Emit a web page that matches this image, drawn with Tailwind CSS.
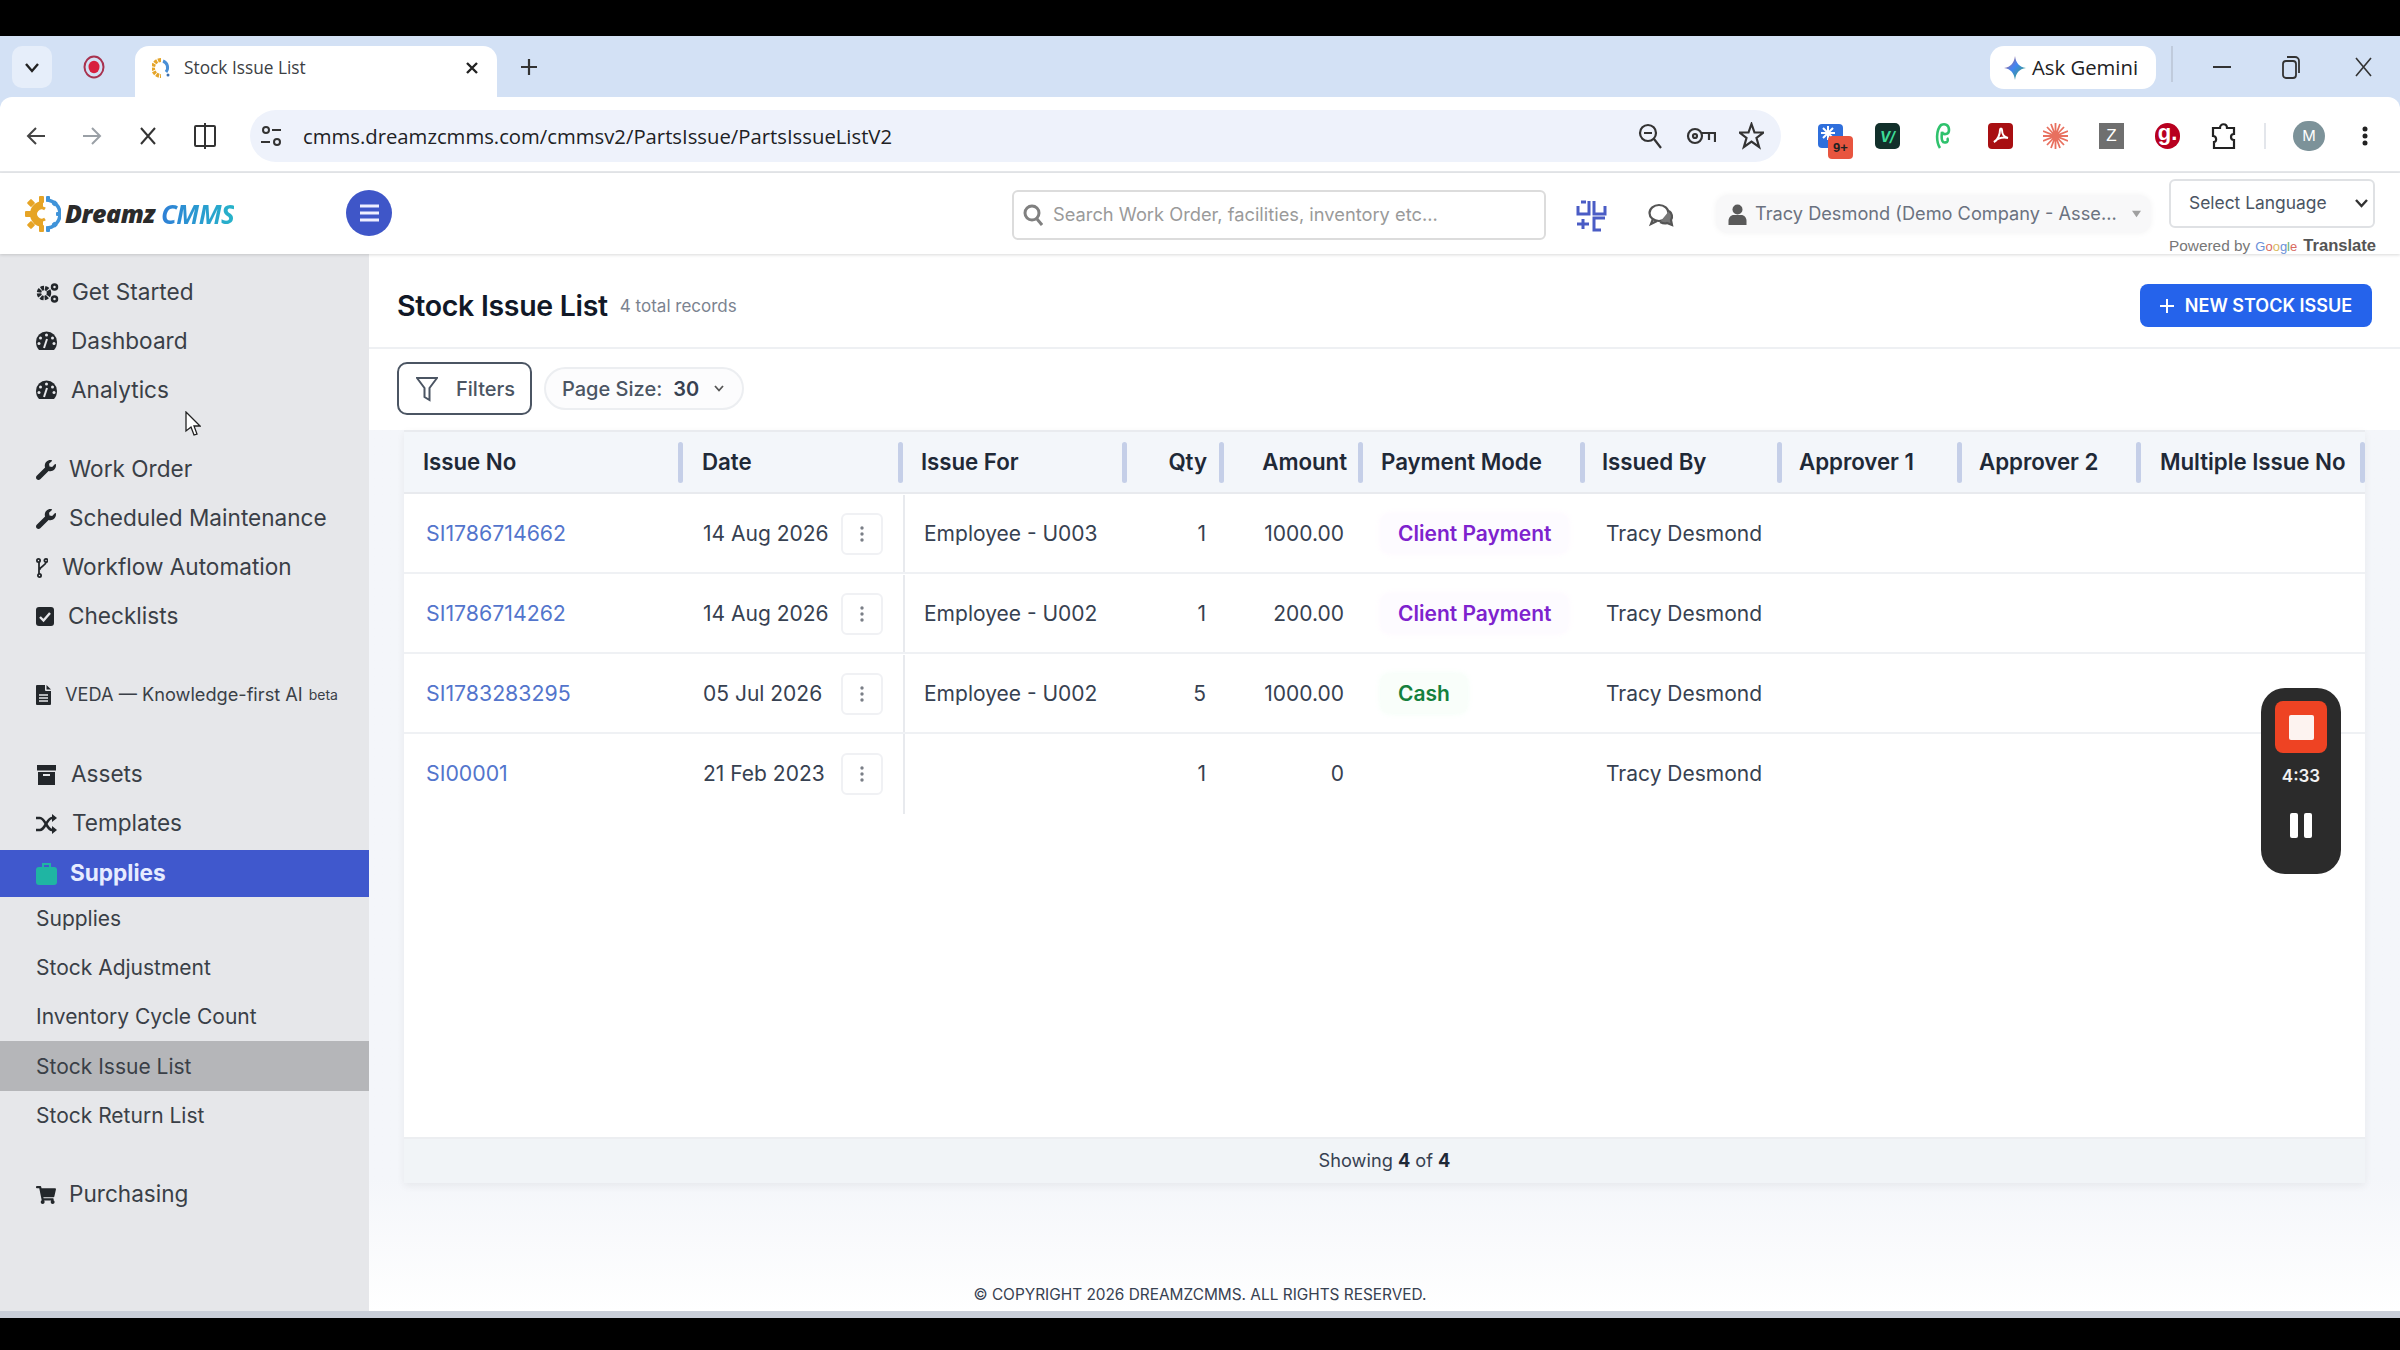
<!DOCTYPE html>
<html lang="en">
<head>
<meta charset="utf-8">
<title>Stock Issue List</title>
<script src="https://cdn.jsdelivr.net/npm/@tailwindcss/browser@4"></script>
</head>
<body class="m-0 bg-black">
<div class="relative flex h-[1350px] w-[2400px] flex-col overflow-hidden bg-black font-['Inter',sans-serif] text-[#374151]">
  <!-- black top -->
  <div class="h-[36px] shrink-0 bg-black"></div>

  <!-- tab strip -->
  <div class="flex h-[61px] shrink-0 items-end bg-[#d3e1f5]">
    <div class="ml-[12px] mb-[9px] flex h-[42px] w-[40px] items-center justify-center rounded-[10px] bg-[#e6eefa]">
      <svg class="h-[18px] w-[18px]" viewBox="0 0 18 18" fill="none" stroke="#222" stroke-width="2.4"><path d="M3 6l6 7 6-7"/></svg>
    </div>
    <div class="ml-[30px] mb-[9px] flex h-[42px] w-[24px] items-center justify-center">
      <svg class="h-[24px] w-[22px]" viewBox="0 0 22 24"><ellipse cx="11" cy="12" rx="9.5" ry="10.5" fill="none" stroke="#a8324f" stroke-width="2"/><ellipse cx="11" cy="12" rx="5.5" ry="6.2" fill="#d8203f"/></svg>
    </div>
    <div class="ml-[29px] flex h-[51px] w-[362px] items-center rounded-t-[14px] bg-white pb-[8px] pl-[17px] pr-[16px]">
      <svg class="h-[20px] w-[20px] shrink-0" viewBox="0 0 20 20"><path d="M9 2a8 8 0 0 0 0 16" fill="none" stroke="#e5a52a" stroke-width="4" stroke-dasharray="3 1"/><path d="M11 3a7 7 0 0 1 3 11" fill="none" stroke="#4a8fd6" stroke-width="3"/><circle cx="16" cy="17" r="1.5" fill="#3b6fb0"/></svg>
      <span class="ml-[12px] font-['Open_Sans',sans-serif] text-[17.3px] text-[#3c4043]">Stock Issue List</span>
      <svg class="ml-auto mr-[2px] h-[14px] w-[14px]" viewBox="0 0 14 14" stroke="#222" stroke-width="2.4"><path d="M2 2l10 10M12 2L2 12"/></svg>
    </div>
    <div class="mb-[9px] ml-[22px] flex h-[42px] items-center">
      <svg class="h-[20px] w-[20px]" viewBox="0 0 20 20" stroke="#333" stroke-width="2.2"><path d="M10 2v16M2 10h16"/></svg>
    </div>
    <div class="mb-[8px] ml-auto flex h-[43px] w-[166px] items-center rounded-[14px] bg-white pl-[13px]">
      <svg class="h-[26px] w-[24px]" viewBox="0 0 24 26"><defs><linearGradient id="gem" x1="0" y1="0" x2="1" y2="1"><stop offset="0" stop-color="#e8594a"/><stop offset=".45" stop-color="#4285f4"/><stop offset="1" stop-color="#34a853"/></linearGradient></defs><path d="M12 1c1 7 4 11 11 12-7 1-10 5-11 12-1-7-4-11-11-12 7-1 10-5 11-12z" fill="url(#gem)"/></svg>
      <span class="ml-[5px] font-['Open_Sans',sans-serif] text-[20.3px] font-medium text-[#202124]">Ask Gemini</span>
    </div>
    <div class="mb-[15px] ml-[15px] h-[36px] w-[2px] bg-[#c0cbdc]"></div>
    <div class="mb-[9px] flex h-[42px] w-[227px] items-center">
      <svg class="ml-[40px] h-[4px] w-[18px]" viewBox="0 0 18 4"><path d="M0 2h18" stroke="#333" stroke-width="2"/></svg>
      <svg class="ml-[51px] h-[24px] w-[18px]" viewBox="0 0 18 24" fill="none" stroke="#333" stroke-width="1.8"><rect x="1" y="6" width="13" height="17" rx="3"/><path d="M5 2h8a4 4 0 0 1 4 4v12"/></svg>
      <svg class="ml-[55px] h-[20px] w-[17px]" viewBox="0 0 17 20" stroke="#333" stroke-width="1.6"><path d="M1 1l15 18M16 1L1 19"/></svg>
    </div>
  </div>

  <!-- chrome toolbar -->
  <div class="h-[76px] shrink-0 bg-[#d3e1f5]">
  <div class="flex h-[76px] items-center rounded-t-[12px] border-b-2 border-[#e6e8eb] bg-white pt-[4px]">
    <svg class="ml-[25px] h-[22px] w-[22px]" viewBox="0 0 22 22" fill="none" stroke="#444" stroke-width="2"><path d="M20 11H3M11 3l-8 8 8 8"/></svg>
    <svg class="ml-[34px] h-[22px] w-[22px]" viewBox="0 0 22 22" fill="none" stroke="#9aa0a6" stroke-width="2"><path d="M2 11h17M11 3l8 8-8 8"/></svg>
    <svg class="ml-[36px] h-[20px] w-[18px]" viewBox="0 0 18 20" stroke="#333" stroke-width="2"><path d="M2 2l14 16M16 2L2 18"/></svg>
    <svg class="ml-[36px] h-[28px] w-[24px]" viewBox="0 0 24 28" fill="none" stroke="#333" stroke-width="2"><path d="M12 1v26M12 4H3a1 1 0 0 0-1 1v18a1 1 0 0 0 1 1h9"/><rect x="12" y="4" width="10" height="20" rx="1"/></svg>
    <div class="ml-[33px] flex h-[52px] w-[1531px] items-center rounded-[26px] bg-[#eef2fb]">
      <svg class="ml-[10px] h-[24px] w-[22px]" viewBox="0 0 22 24" fill="none" stroke="#333" stroke-width="2"><circle cx="6" cy="6" r="3"/><path d="M12 6h9M1 18h9"/><circle cx="17" cy="18" r="3"/></svg>
      <span class="ml-[21px] font-['Open_Sans',sans-serif] text-[20.3px] text-[#202124]">cmms.dreamzcmms.com/cmmsv2/PartsIssue/PartsIssueListV2</span>
      <svg class="ml-auto h-[26px] w-[24px]" viewBox="0 0 24 26" fill="none" stroke="#333" stroke-width="2.2"><circle cx="10" cy="10" r="8"/><path d="M6 10h8M16 16l7 9"/></svg>
      <svg class="ml-[24px] h-[20px] w-[30px]" viewBox="0 0 30 20" fill="none" stroke="#333" stroke-width="2.2"><circle cx="9" cy="10" r="7"/><circle cx="9" cy="10" r="2"/><path d="M16 7h13v9M23 8v6"/></svg>
      <svg class="ml-[23px] h-[28px] w-[25px]" viewBox="0 0 25 28" fill="none" stroke="#333" stroke-width="2.2"><path d="M12.500 2l3 8.500h9l-7 5.500 2.600 9-7.600-5.500-7.600 5.500 2.600-9-7-5.500h9z"/></svg>
      <div class="w-[17px]"></div>
    </div>
    <div class="relative ml-[37px] h-[24px] w-[25px] rounded-[4px] bg-[#2f6fdc]">
      <svg class="absolute left-[3px] top-[2px] h-[14px] w-[14px]" viewBox="0 0 14 14" stroke="#fff" stroke-width="2"><path d="M7 0v14M0 7h14M2 2l10 10M12 2L2 12"/></svg>
      <span class="absolute left-[10px] top-[12px] flex h-[23px] w-[25px] items-center justify-center rounded-[4px] bg-[#e8553f] font-['Liberation_Sans',sans-serif] text-[13px] font-bold text-[#222]">9+</span>
    </div>
    <div class="ml-[32px] flex h-[26px] w-[25px] items-center justify-center rounded-[5px] bg-[#12302b] text-[14px] font-bold italic text-[#3ddc97]">V/</div>
    <svg class="ml-[35px] h-[28px] w-[16px]" viewBox="0 0 16 28" fill="none" stroke="#2fc26d" stroke-width="2.600"><path d="M5 26C1 20 1 8 6 3c4-2 8 0 8 5 0 5-6 5-7 2-1 8 0 12 5 10 1-1 1-3 0-4"/></svg>
    <div class="ml-[37px] flex h-[26px] w-[25px] items-center justify-center rounded-[4px] bg-[#a80f12]">
      <svg class="h-[18px] w-[18px]" viewBox="0 0 18 18" fill="none" stroke="#fff" stroke-width="2"><path d="M2 15c4-2 6-8 6-12 0-2 2-2 2 0 0 5 2 7 6 8-5-1-10 0-14 4z"/></svg>
    </div>
    <svg class="ml-[30px] h-[26px] w-[25px]" viewBox="0 0 25 26" stroke="#e8705f" stroke-width="1.800"><path d="M12.500 0v26M0 13h25M4 4l17 18M21 4L4 22M8 1l9 24M17 1L8 25M0 8l25 10M25 8L0 18"/></svg>
    <div class="ml-[31px] flex h-[26px] w-[25px] items-center justify-center bg-[#6f6f6f] font-['Liberation_Sans',sans-serif] text-[17px] text-white">Z</div>
    <div class="ml-[31px] flex h-[26px] w-[25px] items-center justify-center rounded-full bg-[#b8001f] font-['Liberation_Sans',sans-serif] text-[22px] font-bold leading-none text-white"><span class="-mt-[6px]">g.</span></div>
    <svg class="ml-[31px] h-[26px] w-[26px]" viewBox="0 0 26 26" fill="none" stroke="#222" stroke-width="2.200"><path d="M2 5h7c0-5 7-5 7 0h7v6c-4 0-4 6 0 6v8H3v-6c3 0 3-6-1-6z"/></svg>
    <div class="ml-[27px] h-[26px] w-[2px] bg-[#e3e6eb]"></div>
    <div class="ml-[27px] flex h-[30px] w-[32px] items-center justify-center rounded-full bg-[#7c9299] text-[15px] text-white">M</div>
    <svg class="ml-[37px] h-[20px] w-[6px]" viewBox="0 0 6 20" fill="#222"><circle cx="3" cy="3" r="2.500"/><circle cx="3" cy="10" r="2.500"/><circle cx="3" cy="17" r="2.500"/></svg>
  </div>
  </div>

  <!-- app header -->
  <div class="z-10 flex h-[81px] shrink-0 items-center bg-white shadow-[0_1px_3px_rgba(0,0,0,0.15)]">
    <div class="ml-[25px] flex w-[321px] items-center">
      <svg class="h-[38px] w-[36px] shrink-0" viewBox="0 0 36 38">
        <path d="M18 6a13 13 0 0 0 0 26z" fill="#e6a426"/>
        <path d="M18 19a19 19 0 0 0-15 0" fill="none" stroke="#e6a426" stroke-width="3"/>
        <g fill="#e6a426"><rect x="14" y="1" width="5" height="7" rx="1"/><rect x="14" y="30" width="5" height="7" rx="1"/><rect x="0" y="16" width="7" height="6" rx="1"/><rect x="3" y="5" width="6" height="6" rx="1" transform="rotate(-45 6 8)"/><rect x="3" y="27" width="6" height="6" rx="1" transform="rotate(45 6 30)"/></g>
        <circle cx="17" cy="19" r="7" fill="#fff"/>
        <path d="M20 14a6 6 0 1 0 0 10" fill="none" stroke="#e6a426" stroke-width="3"/>
        <path d="M21 5a14 14 0 0 1 0 28" fill="none" stroke="#3f93d9" stroke-width="3.500"/>
        <g fill="#3f93d9"><rect x="21" y="1" width="4" height="5" rx="1"/><rect x="21" y="32" width="4" height="5" rx="1"/><rect x="31" y="17" width="5" height="4" rx="1"/><rect x="28" y="6" width="4" height="5" rx="1" transform="rotate(45 30 8)"/><rect x="28" y="27" width="4" height="5" rx="1" transform="rotate(-45 30 30)"/></g>
      </svg>
      <span class="ml-[4px] font-['Open_Sans',sans-serif] text-[25px] font-extrabold italic leading-none tracking-[-0.5px] text-[#2b2b2b]">Dreamz</span>
      <span class="ml-[6px] bg-gradient-to-r from-[#2f7fd6] to-[#27b3c9] bg-clip-text font-['Open_Sans',sans-serif] text-[26px] font-bold italic leading-none tracking-[-0.5px] text-transparent">CMMS</span>
    </div>
    <div class="-mt-[2px] flex h-[46px] w-[46px] items-center justify-center rounded-full bg-[#3f56c8]">
      <svg class="h-[18px] w-[19px]" viewBox="0 0 19 18" stroke="#eef" stroke-width="3.200"><path d="M0 2h19M0 9h19M0 16h19"/></svg>
    </div>
    <div class="ml-[620px] mt-[2px] flex h-[50px] w-[534px] items-center rounded-[6px] border-2 border-[#dcdcdc] bg-white">
      <svg class="ml-[9px] h-[22px] w-[20px]" viewBox="0 0 20 22" fill="none" stroke="#808080" stroke-width="3"><circle cx="9" cy="9" r="7"/><path d="M14 15l5 6"/></svg>
      <span class="ml-[10px] pt-[1px] text-[18.3px] text-[#9a9a9a]">Search Work Order, facilities, inventory etc...</span>
    </div>
    <svg class="ml-[29px] mt-[5px] h-[32px] w-[32px]" viewBox="0 0 32 32" fill="none" stroke="#4a5cc5" stroke-width="3"><path d="M3 6v8h11V1M6 2h5M19 1v13h11V6M2 24h12M8 19v10M30 18H19v12h7"/></svg>
    <svg class="ml-[41px] mt-[3px] h-[24px] w-[26px]" viewBox="0 0 26 24" fill="none" stroke="#555" stroke-width="2.200"><ellipse cx="11" cy="10" rx="9.500" ry="8"/><path d="M5 16l-2 5 6-3"/><path d="M21 8c3 2 4 6 2 9l1 5-5-2c-2 1-5 0-7-1" fill="#777" stroke="#555"/></svg>
    <div class="ml-[42px] mt-[1px] flex h-[38px] w-[435px] items-center rounded-[12px] bg-[#f8f8f9] shadow-[0_0_6px_rgba(0,0,0,0.05)]">
      <svg class="ml-[12px] h-[21px] w-[19px] shrink-0" viewBox="0 0 18 21" fill="#5a5a5a"><circle cx="9" cy="5.500" r="5"/><path d="M0 21v-4c0-4 3-6 5-6h8c2 0 5 2 5 6v4z"/></svg>
      <span class="ml-[8px] whitespace-nowrap text-[18.2px] text-[#6b7280]">Tracy Desmond (Demo Company - Asse...</span>
      <svg class="ml-[15px] h-[8px] w-[9px] shrink-0" viewBox="0 0 11 8" fill="#a0a0a0"><path d="M0 0h11L5.500 8z"/></svg>
    </div>
    <div class="ml-[18px] flex w-[206px] flex-col self-start pt-[6px]">
      <div class="flex h-[49px] items-center rounded-[6px] border-2 border-[#dfe1e4] bg-white pl-[18px]">
        <span class="text-[17.4px] text-[#4b5563]">Select Language</span>
        <svg class="ml-auto mr-[5px] h-[9px] w-[13px]" viewBox="0 0 13 9" fill="none" stroke="#333" stroke-width="2.400"><path d="M1 1l5.500 6L12 1"/></svg>
      </div>
      <div class="mt-[10px] flex h-[16px] items-center whitespace-nowrap font-['Liberation_Sans',sans-serif] text-[15.4px] leading-none text-[#777]">
        Powered by
        <span class="ml-[5px] text-[13px]"><span class="text-[#6a8fd8]">G</span><span class="text-[#d86a5f]">o</span><span class="text-[#d8b95f]">o</span><span class="text-[#6a8fd8]">g</span><span class="text-[#5fae6f]">l</span><span class="text-[#d86a5f]">e</span></span>
        <span class="ml-[6px] text-[16.6px] font-bold text-[#555]">Translate</span>
      </div>
    </div>
  </div>

  <!-- body -->
  <div class="flex min-h-0 flex-1">
    <!-- sidebar -->
    <nav class="flex w-[369px] shrink-0 flex-col bg-[#e6e7ea] pt-[14px] text-[22.6px] leading-none text-[#3a3f47]">
      <a class="flex h-[49px] items-center pl-[36px]">
        <svg class="h-[22px] w-[23px]" viewBox="0 0 23 22" fill="none" stroke="#23272b"><circle cx="8" cy="11" r="5" stroke-width="4.500" stroke-dasharray="3 1"/><circle cx="18.500" cy="5" r="2.500" stroke-width="2.500"/><circle cx="18.500" cy="17" r="2.500" stroke-width="2.500"/></svg>
        <span class="ml-[13px]">Get Started</span>
      </a>
      <a class="flex h-[49px] items-center pl-[36px]">
        <svg class="h-[21px] w-[21px]" viewBox="0 0 21 21"><path d="M0 11a10.500 10.500 0 1 1 21 0c0 3-1 6-3 8H3c-2-2-3-5-3-8z" fill="#23272b"/><g fill="#e6e7ea"><circle cx="10.500" cy="4" r="1.500"/><circle cx="4.500" cy="7" r="1.500"/><circle cx="16.500" cy="7" r="1.500"/><circle cx="3" cy="12.500" r="1.500"/><circle cx="18" cy="12.500" r="1.500"/></g><path d="M8 17l3-9" stroke="#e6e7ea" stroke-width="2"/></svg>
        <span class="ml-[14px]">Dashboard</span>
      </a>
      <a class="flex h-[49px] items-center pl-[36px]">
        <svg class="h-[21px] w-[21px]" viewBox="0 0 21 21"><path d="M0 11a10.500 10.500 0 1 1 21 0c0 3-1 6-3 8H3c-2-2-3-5-3-8z" fill="#23272b"/><g fill="#e6e7ea"><circle cx="10.500" cy="4" r="1.500"/><circle cx="4.500" cy="7" r="1.500"/><circle cx="16.500" cy="7" r="1.500"/><circle cx="3" cy="12.500" r="1.500"/><circle cx="18" cy="12.500" r="1.500"/></g><path d="M8 17l3-9" stroke="#e6e7ea" stroke-width="2"/></svg>
        <span class="ml-[14px]">Analytics</span>
      </a>
      <a class="mt-[30px] flex h-[49px] items-center pl-[36px]">
        <svg class="h-[20px] w-[20px]" viewBox="0 0 512 512" fill="#23272b"><path d="M507.73 109.1c-2.24-9.03-13.54-12.09-20.12-5.51l-74.36 74.36-67.88-11.31-11.31-67.88 74.36-74.36c6.62-6.62 3.43-17.9-5.66-20.16-47.38-11.74-99.55.91-136.58 37.93-39.64 39.64-50.55 97.1-34.05 147.2L18.74 402.76c-24.99 24.99-24.99 65.51 0 90.5 24.99 24.99 65.51 24.99 90.5 0l213.21-213.21c50.12 16.71 107.47 5.68 147.37-34.22 37.07-37.07 49.7-89.32 37.91-136.73z"/></svg>
        <span class="ml-[13px]">Work Order</span>
      </a>
      <a class="flex h-[49px] items-center pl-[36px]">
        <svg class="h-[20px] w-[20px]" viewBox="0 0 512 512" fill="#23272b"><path d="M507.73 109.1c-2.24-9.03-13.54-12.09-20.12-5.51l-74.36 74.36-67.88-11.31-11.31-67.88 74.36-74.36c6.62-6.62 3.43-17.9-5.66-20.16-47.38-11.74-99.55.91-136.58 37.93-39.64 39.64-50.55 97.1-34.05 147.2L18.74 402.76c-24.99 24.99-24.99 65.51 0 90.5 24.99 24.99 65.51 24.99 90.5 0l213.21-213.21c50.12 16.71 107.47 5.68 147.37-34.22 37.07-37.07 49.7-89.32 37.91-136.73z"/></svg>
        <span class="ml-[13px]">Scheduled Maintenance</span>
      </a>
      <a class="flex h-[49px] items-center pl-[36px]">
        <svg class="h-[20px] w-[12px]" viewBox="0 0 12 20" fill="none" stroke="#23272b" stroke-width="1.800"><circle cx="2.500" cy="2.500" r="1.600"/><circle cx="10" cy="2.500" r="1.600"/><circle cx="3.500" cy="17.500" r="1.600"/><path d="M3 4v12M10 4c0 4-6 4-6.500 8"/></svg>
        <span class="ml-[14px]">Workflow Automation</span>
      </a>
      <a class="flex h-[49px] items-center pl-[36px]">
        <svg class="h-[19px] w-[18px]" viewBox="0 0 18 19"><rect width="18" height="19" rx="3" fill="#23272b"/><path d="M4 10l3.500 3.500L14 6" fill="none" stroke="#e6e7ea" stroke-width="2.400"/></svg>
        <span class="ml-[14px]">Checklists</span>
      </a>
      <a class="mt-[29px] flex h-[49px] items-center whitespace-nowrap pl-[36px] text-[18.2px]">
        <svg class="h-[20px] w-[15px] shrink-0" viewBox="0 0 15 20"><path d="M0 1a1 1 0 0 1 1-1h8v5a1 1 0 0 0 1 1h5v13a1 1 0 0 1-1 1H1a1 1 0 0 1-1-1z" fill="#23272b"/><path d="M3 10h9M3 13h9M3 16h9" stroke="#e6e7ea" stroke-width="1.500"/><path d="M10.500 0L15 4.500h-4.500z" fill="#23272b"/></svg>
        <span class="ml-[14px]">VEDA — Knowledge-first AI</span>
        <span class="ml-[6px] text-[14px]">beta</span>
      </a>
      <a class="mt-[31px] flex h-[49px] items-center pl-[37px]">
        <svg class="h-[20px] w-[19px]" viewBox="0 0 19 20"><rect width="19" height="5.500" fill="#23272b"/><path d="M1 7h17v13H1z" fill="#23272b"/><rect x="6" y="9" width="7" height="2" fill="#e6e7ea"/></svg>
        <span class="ml-[15px]">Assets</span>
      </a>
      <a class="flex h-[49px] items-center pl-[36px]">
        <svg class="h-[20px] w-[21px]" viewBox="0 0 21 20" fill="none" stroke="#23272b" stroke-width="2.600"><path d="M0 4h4c5 0 7 12 12 12h3M0 16h4c5 0 7-12 12-12h3"/><path d="M16 0l5 4-5 4zM16 12l5 4-5 4z" fill="#23272b" stroke="none"/></svg>
        <span class="ml-[15px]">Templates</span>
      </a>
      <a class="mt-[2px] flex h-[47px] items-center bg-[#4058cd] pl-[36px] font-bold text-[#e6ecff]">
        <svg class="h-[23px] w-[21px]" viewBox="0 0 21 23"><path d="M3 5h15a3 3 0 0 1 3 3v12a3 3 0 0 1-3 3H3a3 3 0 0 1-3-3V8a3 3 0 0 1 3-3z" fill="#1fb5a3"/><path d="M7 5V2h7v3" fill="none" stroke="#1fb5a3" stroke-width="2"/></svg>
        <span class="ml-[13px]">Supplies</span>
      </a>
      <div class="-mt-[3px] text-[21px]">
        <a class="flex h-[49px] items-center pl-[36px]">Supplies</a>
        <a class="flex h-[49px] items-center pl-[36px]">Stock Adjustment</a>
        <a class="flex h-[49px] items-center pl-[36px]">Inventory Cycle Count</a>
        <a class="flex h-[50px] items-center bg-[#b5b6b9] pl-[36px]">Stock Issue List</a>
        <a class="flex h-[49px] items-center pl-[36px]">Stock Return List</a>
      </div>
      <a class="mt-[30px] flex h-[49px] items-center pl-[36px]">
        <svg class="h-[18px] w-[20px]" viewBox="0 0 576 512" fill="#23272b"><path d="M528.12 301.319l47.273-208C578.806 78.301 567.391 64 551.99 64H159.208l-9.166-44.81C147.758 8.021 137.93 0 126.529 0H24C10.745 0 0 10.745 0 24v16c0 13.255 10.745 24 24 24h69.883l70.248 343.435C147.325 417.1 136 435.222 136 456c0 30.928 25.072 56 56 56s56-25.072 56-56c0-15.674-6.447-29.835-16.824-40h209.647C430.447 426.165 424 440.326 424 456c0 30.928 25.072 56 56 56s56-25.072 56-56c0-22.172-12.888-41.332-31.579-50.405l5.517-24.276c3.413-15.018-8.002-29.319-23.403-29.319H218.117l-6.545-32h293.145c11.206 0 20.92-7.754 23.403-18.681z"/></svg>
        <span class="ml-[13px]">Purchasing</span>
      </a>
    </nav>

    <!-- main -->
    <main class="flex min-w-0 flex-1 flex-col bg-white">
      <div class="flex h-[95px] shrink-0 items-center border-b-2 border-[#eef0f3] pl-[28px] pr-[28px] pt-[10px]">
        <h1 class="mt-[2px] text-[28.5px] font-semibold leading-none tracking-[-0.3px] text-[#111827]">Stock Issue List</h1>
        <span class="ml-[12px] mt-[3px] text-[17px] text-[#7b8390]">4 total records</span>
        <button class="ml-auto flex h-[43px] w-[232px] items-center justify-center rounded-[8px] bg-[#2563eb] text-[18px] font-semibold text-white">
          <svg class="mr-[11px] h-[14px] w-[14px]" viewBox="0 0 14 14" stroke="#fff" stroke-width="2"><path d="M7 0v14M0 7h14"/></svg>
          NEW STOCK ISSUE
        </button>
      </div>
      <div class="flex h-[81px] shrink-0 items-center pl-[28px]">
        <div class="-mt-[2px] flex h-[53px] w-[135px] items-center rounded-[10px] border-2 border-[#4b5563] bg-white pl-[17px] text-[20px] font-medium text-[#4b5563]">
          <svg class="h-[26px] w-[22px]" viewBox="0 0 22 26" fill="none" stroke="#4b5563" stroke-width="2"><path d="M1 2h20l-7.500 10v12l-5-3v-9z"/></svg>
          <span class="ml-[18px]">Filters</span>
        </div>
        <div class="ml-[12px] -mt-[2px] flex h-[43px] w-[200px] items-center rounded-full border-2 border-[#eceef1] bg-[#fcfcfd] pl-[16px] text-[20px] font-medium text-[#4b5563]">
          Page Size:
          <span class="ml-[11px] font-semibold text-[#374151]">30</span>
          <svg class="ml-[15px] h-[7px] w-[10px]" viewBox="0 0 10 7" fill="none" stroke="#555" stroke-width="1.800"><path d="M1 1l4 4.500L9 1"/></svg>
        </div>
      </div>

      <!-- table area -->
      <div class="flex min-h-0 flex-1 flex-col bg-gradient-to-b from-[#f4f6fa] via-[#f4f6fa] via-85% to-white">
        <div class="ml-[35px] flex h-[753px] w-[1961px] shrink-0 flex-col border-t-2 border-[#e9ebef] bg-white shadow-[0_3px_8px_rgba(0,0,0,0.06)]">
          <div class="grid h-[62px] shrink-0 grid-cols-[279px_220px_224px_97px_139px_222px_197px_180px_179px_224px] border-b-2 border-[#e8eaee] bg-[#f3f6fa] text-[22.3px] font-semibold tracking-[-0.05px] text-[#1f2937]">
            <div class="relative flex items-center pl-[19px]">Issue No<i class="absolute right-0 top-[10px] h-[41px] w-[5px] rounded bg-[#c5cfe8]"></i></div>
            <div class="relative flex items-center pl-[19px]">Date<i class="absolute right-0 top-[10px] h-[41px] w-[5px] rounded bg-[#c5cfe8]"></i></div>
            <div class="relative flex items-center pl-[18px]">Issue For<i class="absolute right-0 top-[10px] h-[41px] w-[5px] rounded bg-[#c5cfe8]"></i></div>
            <div class="relative flex items-center justify-end pr-[17px]">Qty<i class="absolute right-0 top-[10px] h-[41px] w-[5px] rounded bg-[#c5cfe8]"></i></div>
            <div class="relative flex items-center justify-end pr-[16px]">Amount<i class="absolute right-0 top-[10px] h-[41px] w-[5px] rounded bg-[#c5cfe8]"></i></div>
            <div class="relative flex items-center pl-[18px]">Payment Mode<i class="absolute right-0 top-[10px] h-[41px] w-[5px] rounded bg-[#c5cfe8]"></i></div>
            <div class="relative flex items-center pl-[17px]">Issued By<i class="absolute right-0 top-[10px] h-[41px] w-[5px] rounded bg-[#c5cfe8]"></i></div>
            <div class="relative flex items-center pl-[17px]">Approver 1<i class="absolute right-0 top-[10px] h-[41px] w-[5px] rounded bg-[#c5cfe8]"></i></div>
            <div class="relative flex items-center pl-[17px]">Approver 2<i class="absolute right-0 top-[10px] h-[41px] w-[5px] rounded bg-[#c5cfe8]"></i></div>
            <div class="relative flex items-center pl-[19px]">Multiple Issue No<i class="absolute right-0 top-[10px] h-[41px] w-[5px] rounded bg-[#c5cfe8]"></i></div>
          </div>

          <div class="grid h-[80px] shrink-0 grid-cols-[279px_222px_222px_97px_139px_222px_197px_180px_179px_224px] border-b-2 border-[#eff1f4] pt-[1px] text-[21px] text-[#374151]">
            <div class="flex items-center pl-[22px] text-[21.3px] text-[#5375cc]">SI1786714662</div>
            <div class="flex items-center border-r-2 border-[#e8eaee] pl-[20px]">14 Aug 2026<span class="ml-auto mr-[20px] flex h-[42px] w-[42px] items-center justify-center rounded-[6px] border-2 border-[#f0f1f4]"><svg class="h-[16px] w-[4px]" viewBox="0 0 4 16" fill="#7a7f87"><circle cx="2" cy="2" r="1.700"/><circle cx="2" cy="8" r="1.700"/><circle cx="2" cy="14" r="1.700"/></svg></span></div>
            <div class="flex items-center pl-[19px]">Employee - U003</div>
            <div class="flex items-center justify-end pr-[18px]">1</div>
            <div class="flex items-center justify-end pr-[19px]">1000.00</div>
            <div class="flex items-center pl-[18px]"><span class="rounded-[8px] bg-[#fdfbff] px-[17px] py-[4px] font-semibold text-[#7e22ce] shadow-[0_0_6px_rgba(250,232,255,0.4)]">Client Payment</span></div>
            <div class="flex items-center pl-[21px]">Tracy Desmond</div>
            <div></div><div></div><div></div>
          </div>

          <div class="grid h-[80px] shrink-0 grid-cols-[279px_222px_222px_97px_139px_222px_197px_180px_179px_224px] border-b-2 border-[#eff1f4] pt-[1px] text-[21px] text-[#374151]">
            <div class="flex items-center pl-[22px] text-[21.3px] text-[#5375cc]">SI1786714262</div>
            <div class="flex items-center border-r-2 border-[#e8eaee] pl-[20px]">14 Aug 2026<span class="ml-auto mr-[20px] flex h-[42px] w-[42px] items-center justify-center rounded-[6px] border-2 border-[#f0f1f4]"><svg class="h-[16px] w-[4px]" viewBox="0 0 4 16" fill="#7a7f87"><circle cx="2" cy="2" r="1.700"/><circle cx="2" cy="8" r="1.700"/><circle cx="2" cy="14" r="1.700"/></svg></span></div>
            <div class="flex items-center pl-[19px]">Employee - U002</div>
            <div class="flex items-center justify-end pr-[18px]">1</div>
            <div class="flex items-center justify-end pr-[19px]">200.00</div>
            <div class="flex items-center pl-[18px]"><span class="rounded-[8px] bg-[#fdfbff] px-[17px] py-[4px] font-semibold text-[#7e22ce] shadow-[0_0_6px_rgba(250,232,255,0.4)]">Client Payment</span></div>
            <div class="flex items-center pl-[21px]">Tracy Desmond</div>
            <div></div><div></div><div></div>
          </div>

          <div class="grid h-[80px] shrink-0 grid-cols-[279px_222px_222px_97px_139px_222px_197px_180px_179px_224px] border-b-2 border-[#eff1f4] pt-[1px] text-[21px] text-[#374151]">
            <div class="flex items-center pl-[22px] text-[21.3px] text-[#5375cc]">SI1783283295</div>
            <div class="flex items-center border-r-2 border-[#e8eaee] pl-[20px]">05 Jul 2026<span class="ml-auto mr-[20px] flex h-[42px] w-[42px] items-center justify-center rounded-[6px] border-2 border-[#f0f1f4]"><svg class="h-[16px] w-[4px]" viewBox="0 0 4 16" fill="#7a7f87"><circle cx="2" cy="2" r="1.700"/><circle cx="2" cy="8" r="1.700"/><circle cx="2" cy="14" r="1.700"/></svg></span></div>
            <div class="flex items-center pl-[19px]">Employee - U002</div>
            <div class="flex items-center justify-end pr-[18px]">5</div>
            <div class="flex items-center justify-end pr-[19px]">1000.00</div>
            <div class="flex items-center pl-[18px]"><span class="rounded-[8px] bg-[#f9fefa] px-[17px] py-[4px] font-semibold text-[#15803d] shadow-[0_0_6px_rgba(220,252,231,0.4)]">Cash</span></div>
            <div class="flex items-center pl-[21px]">Tracy Desmond</div>
            <div></div><div></div><div></div>
          </div>

          <div class="grid h-[80px] shrink-0 grid-cols-[279px_222px_222px_97px_139px_222px_197px_180px_179px_224px] text-[21px] text-[#374151]">
            <div class="flex items-center pl-[22px] text-[21.3px] text-[#5375cc]">SI00001</div>
            <div class="flex items-center border-r-2 border-[#e8eaee] pl-[20px]">21 Feb 2023<span class="ml-auto mr-[20px] flex h-[42px] w-[42px] items-center justify-center rounded-[6px] border-2 border-[#f0f1f4]"><svg class="h-[16px] w-[4px]" viewBox="0 0 4 16" fill="#7a7f87"><circle cx="2" cy="2" r="1.700"/><circle cx="2" cy="8" r="1.700"/><circle cx="2" cy="14" r="1.700"/></svg></span></div>
            <div></div>
            <div class="flex items-center justify-end pr-[18px]">1</div>
            <div class="flex items-center justify-end pr-[19px]">0</div>
            <div></div>
            <div class="flex items-center pl-[21px]">Tracy Desmond</div>
            <div></div><div></div><div></div>
          </div>

          <div class="flex-1"></div>
          <div class="flex h-[46px] shrink-0 items-center justify-center border-t-2 border-[#eceef1] bg-[#f1f4f7] text-[18.2px] text-[#374151]">
            <span>Showing <b class="font-bold text-[#1f2937]">4</b> of <b class="font-bold text-[#1f2937]">4</b></span>
          </div>
        </div>
        <div class="flex-1"></div>
        <div class="flex h-[32px] shrink-0 items-center justify-center pr-[369px] text-[15.4px] text-[#374151]">© COPYRIGHT 2026 DREAMZCMMS. ALL RIGHTS RESERVED.</div>
      </div>
    </main>
  </div>

  <!-- bottom chrome edge + black -->
  <div class="h-[7px] shrink-0 bg-[#c9ced8]"></div>
  <div class="h-[32px] shrink-0 bg-black"></div>

  <!-- floating recorder -->
  <div class="absolute left-[2261px] top-[688px] flex h-[186px] w-[80px] flex-col items-center rounded-[24px] bg-[#2b2b2b]">
    <div class="mt-[13px] flex h-[52px] w-[52px] items-center justify-center rounded-[8px] bg-[#ee4323]">
      <div class="h-[25px] w-[25px] rounded-[2px] bg-[#fdf3f0]"></div>
    </div>
    <span class="mt-[15px] text-[17px] font-semibold leading-none text-[#f2f2f2]">4:33</span>
    <div class="mt-[28px] flex gap-[6px]">
      <i class="h-[25px] w-[8px] rounded-[2px] bg-white"></i>
      <i class="h-[25px] w-[8px] rounded-[2px] bg-white"></i>
    </div>
  </div>

  <!-- mouse cursor -->
  <svg class="absolute left-[185px] top-[411px] h-[25px] w-[16px]" viewBox="0 0 16 25"><path d="M1 1v19l5-4 3 8 3-1-3-8h6z" fill="#fff" stroke="#222" stroke-width="1.300"/></svg>
</div>
</body>
</html>
